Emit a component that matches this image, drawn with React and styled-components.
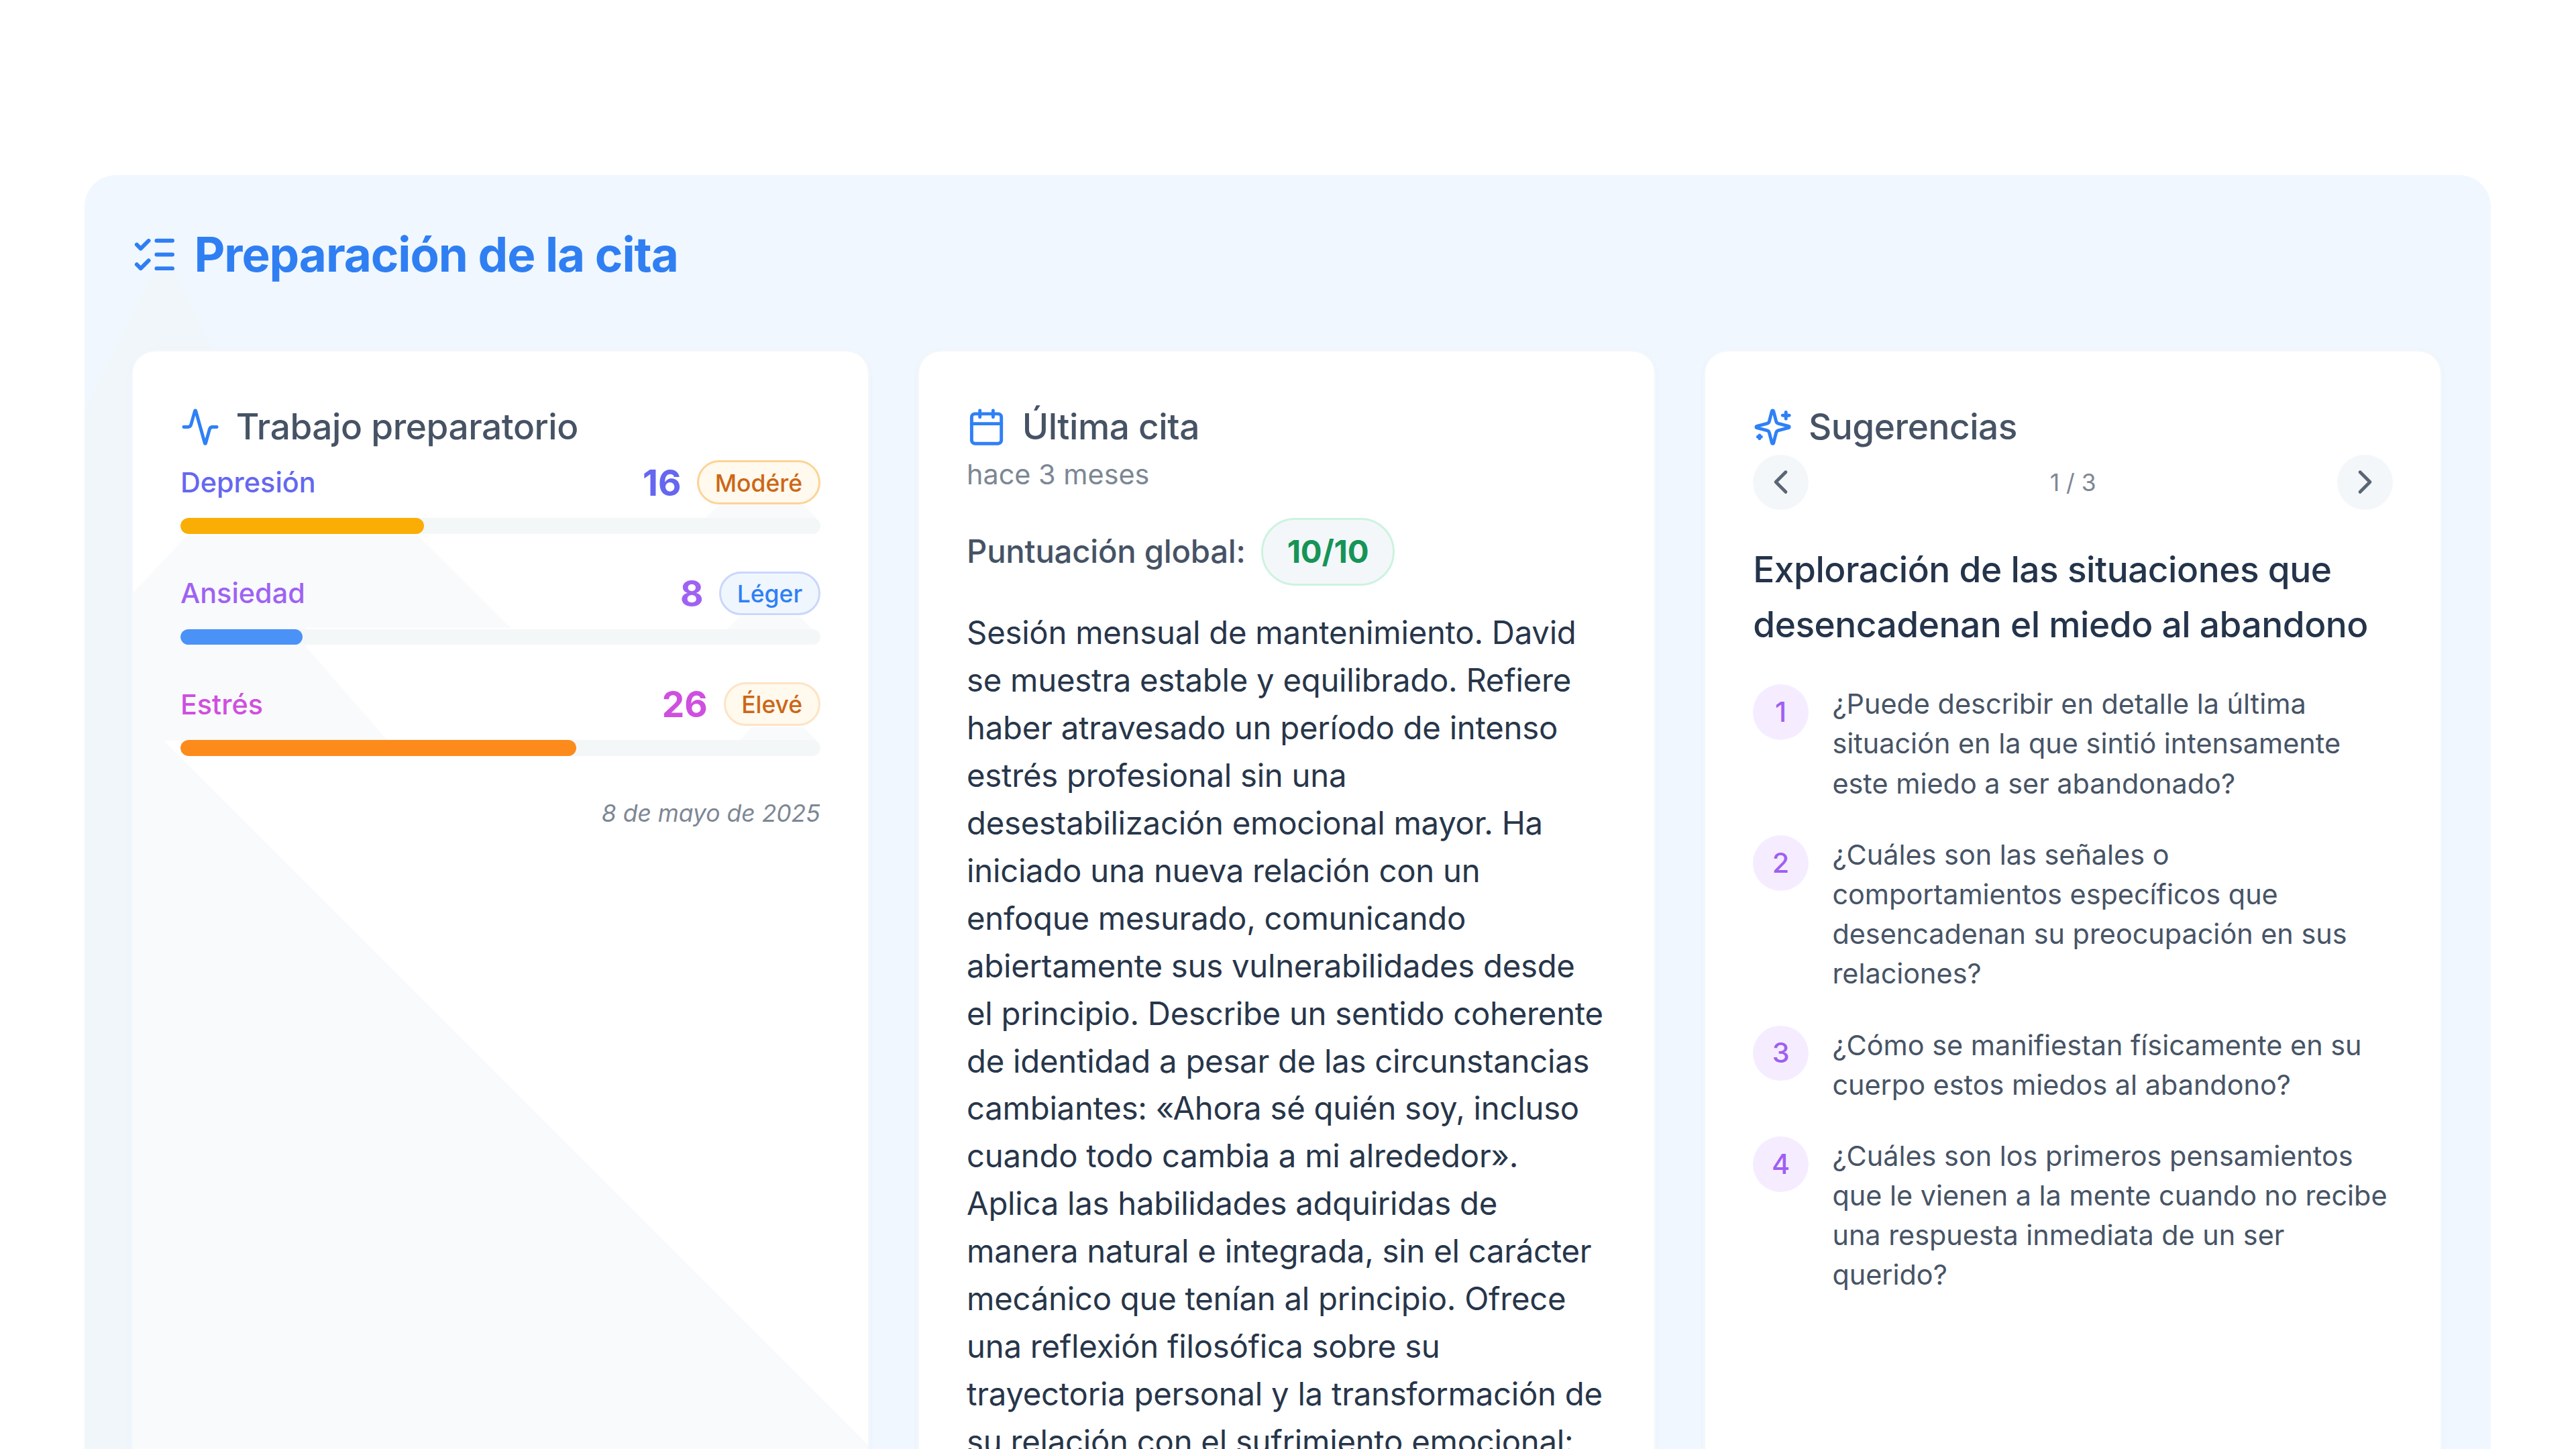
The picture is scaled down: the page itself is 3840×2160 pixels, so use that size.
import React, { useState } from "react";
import styled, { createGlobalStyle } from "styled-components";
import {
  Activity,
  Calendar,
  ChevronLeft,
  ChevronRight,
  ListChecks,
} from "lucide-react";

const GlobalStyle = createGlobalStyle`
  * {
    box-sizing: border-box;
  }

  html {
    font-size: 47.28px;
  }

  body {
    margin: 0;
    height: 100vh;
    overflow: hidden;
    background-color: #fff;
    font-family: Inter, "Liberation Sans", sans-serif;
    -webkit-font-smoothing: antialiased;
  }

  h1, h2, h3, p, ol {
    margin: 0;
    padding: 0;
    font-weight: 500;
  }
`;

const Page = styled.main`
  height: 100vh;
  overflow: hidden;
  padding: 261px 127.5px 0 126px;
`;

const Panel = styled.section`
  position: relative;
  min-height: 2100px;
  padding: 1.5rem 71.5px 1.5rem 69px;
  background-color: #f0f7ff;
  border-radius: 1rem;
  overflow: hidden;
`;

/* soft shadows cast behind the content */
const Shade = styled.div`
  position: absolute;
  inset: 0;
  background-color: ${(props) => props.$tint || "#f9fafc"};
  clip-path: polygon(${(props) => props.$shape});
`;

const PanelTitle = styled.h1`
  position: relative;
  display: flex;
  align-items: center;
  gap: 0.5rem;
  margin-bottom: 2rem;
  color: #2f7ff3;
  font-size: 1.5rem;
  line-height: 2rem;
  font-weight: 700;
  letter-spacing: -0.0156em;
`;

const Columns = styled.div`
  position: relative;
  display: grid;
  grid-template-columns: repeat(3, minmax(0, 1fr));
  gap: 70.5px;
`;

const Card = styled.article`
  position: relative;
  min-height: 1850px;
  padding: 1.5rem;
  background-color: #fff;
  background-clip: padding-box;
  border: 3px solid #f3f7fa;
  border-radius: 0.75rem;
  box-shadow: 0 2px 6px rgba(59, 130, 246, 0.05);
  overflow: hidden;
`;

const CardBody = styled.div`
  position: relative;
`;

const CardTitle = styled.h2`
  display: flex;
  align-items: center;
  gap: 0.5rem;
  color: #465365;
  font-size: 1.125rem;
  line-height: 1.75rem;
  letter-spacing: -0.009em;

  svg {
    color: #2f80f6;
  }
`;

const Scale = styled.div`
  margin-bottom: 1rem;

  .head {
    display: flex;
    align-items: center;
    height: 1.75rem;
    margin-bottom: 0.25rem;
    color: ${(props) => props.$color};
  }

  .label {
    flex: 1;
    font-size: 0.875rem;
    font-weight: 500;
  }

  .value {
    margin-right: 0.5rem;
    font-size: 1.125rem;
    font-weight: 700;
  }
`;

const Level = styled.span`
  padding: 0.15rem 0.5rem 0.1rem;
  border: 3px solid ${(props) => props.$border};
  border-radius: 999px;
  background-color: ${(props) => props.$bg};
  color: ${(props) => props.$color};
  font-size: 0.75rem;
  line-height: 1rem;
  font-weight: 500;
`;

const Track = styled.div`
  height: 0.5rem;
  border-radius: 999px;
  background-color: #f4f7f8;
  overflow: hidden;
`;

const Fill = styled.div`
  height: 100%;
  border-radius: 999px;
  background-color: ${(props) => props.$color};
`;

const DateNote = styled.p`
  margin-top: 1.325rem;
  color: #7d8794;
  font-size: 0.75rem;
  line-height: 1rem;
  font-weight: 400;
  font-style: italic;
  text-align: right;
`;

const Ago = styled.p`
  color: #7d8794;
  font-size: 0.875rem;
  line-height: 1.25rem;
  font-weight: 400;
`;

const ScoreRow = styled.div`
  display: flex;
  align-items: center;
  gap: 0.5rem;
  margin: 0.75rem 0;
  color: #465365;
  font-size: 1rem;
  line-height: 1.5rem;
  font-weight: 500;
  letter-spacing: -0.005em;
`;

const Score = styled.span`
  padding: 0.25rem 0.75rem;
  border: 3px solid #cdf3de;
  border-radius: 999px;
  background-color: #f3f7fa;
  color: #169456;
  font-weight: 700;
`;

const Summary = styled.p`
  padding-right: 4px;
  color: #27364a;
  font-size: 1rem;
  line-height: 1.5rem;
  font-weight: 400;
  letter-spacing: -0.0053em;
`;

const Pager = styled.div`
  display: flex;
  align-items: center;
  justify-content: space-between;
  margin-bottom: 1rem;
  color: #7d8794;
  font-size: 0.75rem;
`;

const PagerButton = styled.button`
  display: flex;
  align-items: center;
  justify-content: center;
  width: 1.75rem;
  height: 1.75rem;
  padding: 0;
  border: none;
  border-radius: 50%;
  background-color: #f3f7f9;
  color: #5b6675;
  cursor: pointer;
`;

const Topic = styled.h3`
  margin-bottom: 1rem;
  color: #24344a;
  font-size: 1.125rem;
  line-height: 1.75rem;
  letter-spacing: -0.009em;
`;

const Questions = styled.ol`
  display: flex;
  flex-direction: column;
  gap: 1rem;
  list-style: none;

  li {
    display: flex;
    align-items: flex-start;
    gap: 0.75rem;
    color: #475466;
    font-size: 0.875rem;
    line-height: 1.25rem;
    font-weight: 400;
  }
`;

const Num = styled.span`
  display: flex;
  flex-shrink: 0;
  align-items: center;
  justify-content: center;
  width: 1.75rem;
  height: 1.75rem;
  border-radius: 50%;
  background-color: #f5edff;
  color: #a05ff3;
  font-weight: 500;
`;

const MAX_SCORE = 42;

const scales = [
  {
    label: "Depresión",
    value: 16,
    color: "#6567f0",
    bar: "#faae05",
    level: { text: "Modéré", color: "#cc6717", bg: "#fff9ee", border: "#fcd396" },
  },
  {
    label: "Ansiedad",
    value: 8,
    color: "#9f62f2",
    bar: "#4a92f7",
    level: { text: "Léger", color: "#2f80f5", bg: "#eff6fe", border: "#cad7fa" },
  },
  {
    label: "Estrés",
    value: 26,
    color: "#cf4fe0",
    bar: "#fd8b1c",
    level: { text: "Élevé", color: "#cc6717", bg: "#fff9ee", border: "#fde4c4" },
  },
];

const questions = [
  "¿Puede describir en detalle la última situación en la que sintió intensamente este miedo a ser abandonado?",
  "¿Cuáles son las señales o comportamientos específicos que desencadenan su preocupación en sus relaciones?",
  "¿Cómo se manifiestan físicamente en su cuerpo estos miedos al abandono?",
  "¿Cuáles son los primeros pensamientos que le vienen a la mente cuando no recibe una respuesta inmediata de un ser querido?",
];

const cardShades = [
  "81px 274px, 425px 274px, 563px 412px, 0 412px, 0 360px",
  "0 412px, 258px 412px, 258px 440px, 380px 580px, 0 580px",
  "0 580px, 46px 580px, 70px 604px, 1096px 1630px, 1096px 100%, 0 100%",
  "873px 229px, 1000px 229px, 1020px 249px, 853px 249px",
  "906px 394px, 993px 394px, 1013px 414px, 886px 414px",
  "922px 560px, 1000px 560px, 1020px 580px, 905px 580px",
];

// Sparkle star with the plus and the small dot beside it
function SparklesIcon({ size }) {
  return (
    <svg
      width={size}
      height={size}
      viewBox="0 0 24 24"
      fill="none"
      stroke="currentColor"
      strokeWidth="2"
      strokeLinecap="round"
      strokeLinejoin="round"
    >
      <path d="M9.937 15.5A2 2 0 0 0 8.5 14.063l-6.135-1.582a.5.5 0 0 1 0-.962L8.5 9.936A2 2 0 0 0 9.937 8.5l1.582-6.135a.5.5 0 0 1 .963 0L14.063 8.5A2 2 0 0 0 15.5 9.937l6.135 1.581a.5.5 0 0 1 0 .964L15.5 14.063a2 2 0 0 0-1.437 1.437l-1.582 6.135a.5.5 0 0 1-.963 0z" />
      <path d="M20 3v4" />
      <path d="M22 5h-4" />
      <path d="M4 17v2" />
      <path d="M5 18H3" />
    </svg>
  );
}

function App() {
  const [page, setPage] = useState(1);
  const total = 3;

  return (
    <>
      <GlobalStyle />
      <Page>
        <Panel>
          <Shade
            $tint="#f1f6fa"
            $shape="104px 142px, 134px 142px, 200px 280px, 66px 300px, 66px 100%, 0 100%, 0 350px"
          />
          <PanelTitle>
            <ListChecks size="1.5rem" />
            Preparación de la cita
          </PanelTitle>

          <Columns>
            <Card>
              {cardShades.map((shape) => (
                <Shade key={shape} $shape={shape} />
              ))}
              <CardBody>
                <CardTitle>
                  <Activity size="1.25rem" />
                  Trabajo preparatorio
                </CardTitle>
                {scales.map((item) => (
                  <Scale key={item.label} $color={item.color}>
                    <div className="head">
                      <span className="label">{item.label}</span>
                      <span className="value">{item.value}</span>
                      <Level
                        $color={item.level.color}
                        $bg={item.level.bg}
                        $border={item.level.border}
                      >
                        {item.level.text}
                      </Level>
                    </div>
                    <Track>
                      <Fill
                        $color={item.bar}
                        style={{ width: `${(item.value / MAX_SCORE) * 100}%` }}
                      />
                    </Track>
                  </Scale>
                ))}
                <DateNote>8 de mayo de 2025</DateNote>
              </CardBody>
            </Card>

            <Card>
              <CardBody>
                <CardTitle>
                  <Calendar size="1.25rem" />
                  Última cita
                </CardTitle>
                <Ago>hace 3 meses</Ago>
                <ScoreRow>
                  Puntuación global:
                  <Score>10/10</Score>
                </ScoreRow>
                <Summary>
                  Sesión mensual de mantenimiento. David se muestra estable y
                  equilibrado. Refiere haber atravesado un período de intenso
                  estrés profesional sin una desestabilización emocional mayor.
                  Ha iniciado una nueva relación con un enfoque mesurado,
                  comunicando abiertamente sus vulnerabilidades desde el
                  principio. Describe un sentido coherente de identidad a pesar
                  de las circunstancias cambiantes: «Ahora sé quién soy, incluso
                  cuando todo cambia a mi alrededor». Aplica las habilidades
                  adquiridas de manera natural e integrada, sin el carácter
                  mecánico que tenían al principio. Ofrece una reflexión
                  filosófica sobre su trayectoria personal y la transformación
                  de su relación con el sufrimiento emocional:
                </Summary>
              </CardBody>
            </Card>

            <Card>
              <CardBody>
                <CardTitle>
                  <SparklesIcon size="1.25rem" />
                  Sugerencias
                </CardTitle>
                <Pager>
                  <PagerButton onClick={() => setPage(Math.max(1, page - 1))}>
                    <ChevronLeft size="1.25rem" />
                  </PagerButton>
                  <span>
                    {page} / {total}
                  </span>
                  <PagerButton onClick={() => setPage(Math.min(total, page + 1))}>
                    <ChevronRight size="1.25rem" />
                  </PagerButton>
                </Pager>
                <Topic>
                  Exploración de las situaciones que desencadenan el miedo al
                  abandono
                </Topic>
                <Questions>
                  {questions.map((question, index) => (
                    <li key={question}>
                      <Num>{index + 1}</Num>
                      <span>{question}</span>
                    </li>
                  ))}
                </Questions>
              </CardBody>
            </Card>
          </Columns>
        </Panel>
      </Page>
    </>
  );
}

export default App;
